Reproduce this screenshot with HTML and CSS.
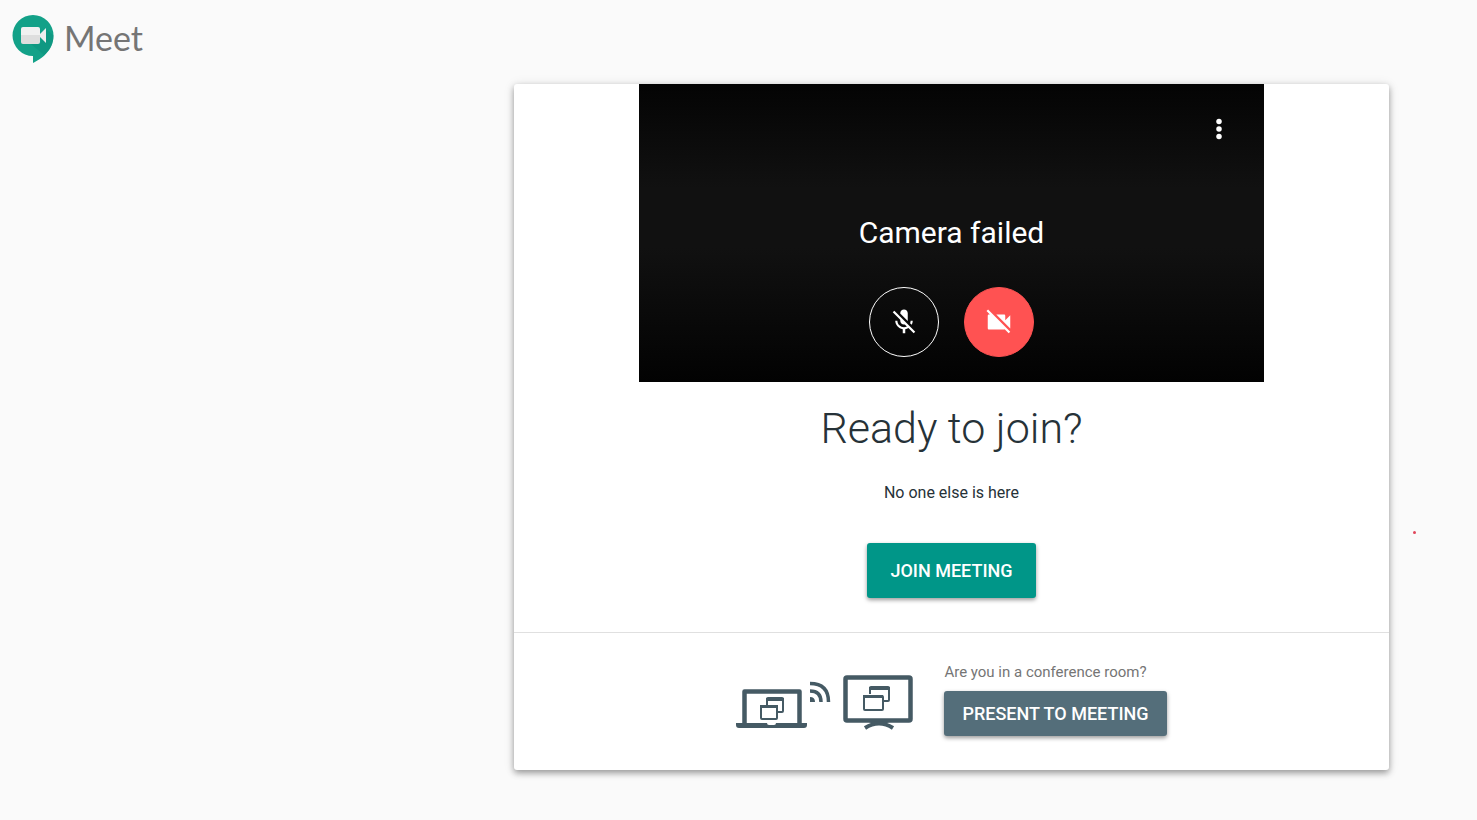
FILE: index.html
```html
<!DOCTYPE html>
<html lang="en">
<head>
    <meta charset="UTF-8">
    <meta name="viewport" content="width=device-width, initial-scale=1.0">
    <title>Meet</title>
    <link rel="stylesheet" href="styles.css">
</head>
<body>
    <header class="header">
        <svg class="logo" viewBox="0 0 42 50" aria-hidden="true">
            <path fill="#13a188" d="M21 1a20.500 20.500 0 1 0 0 41v7c8-4 20.500-12 20.500-27.500A20.500 20.500 0 0 0 21 1z"/>
            <path fill="#0c8f7c" d="M28 30l6-15 7.500 6.500c0 9-4 15-9.500 19.500L19 30z" opacity=".5"/>
            <path fill="#f1f1f1" d="M11 13h15q2 0 2 2v7H9v-7q0-2 2-2z"/>
            <path fill="#dedede" d="M9 21h19v7q0 2-2 2H11q-2 0-2-2z"/>
            <path fill="#eeeeee" d="M28 20l6-6v15l-6-6z"/>
        </svg>
        <span class="product">Meet</span>
    </header>

    <main class="main">
        <section class="card">
            <div class="preview">
                <button class="menu" aria-label="More options">
                    <svg class="icon" viewBox="0 0 24 24"><circle cx="12" cy="6" r="2.200"/><circle cx="12" cy="12" r="2.200"/><circle cx="12" cy="18" r="2.200"/></svg>
                </button>
                <p class="status">Camera failed</p>
                <div class="controls">
                    <button class="control" aria-label="Turn on microphone">
                        <svg class="icon" viewBox="0 0 24 24"><path d="M19 11h-1.700c0 .74-.16 1.430-.43 2.050l1.230 1.230c.56-.98.9-2.090.9-3.280zm-4.020.17c0-.06.02-.11.02-.17V5c0-1.660-1.340-3-3-3S9 3.340 9 5v.18l5.980 5.990zM4.270 3L3 4.270l6.010 6.010V11c0 1.660 1.330 3 2.990 3 .22 0 .44-.03.65-.08l1.660 1.660c-.71.33-1.500.52-2.310.52-2.760 0-5.300-2.100-5.300-5.100H5c0 3.410 2.720 6.230 6 6.720V21h2v-3.280c.91-.13 1.770-.45 2.540-.9L19.730 21 21 19.730 4.270 3z"/></svg>
                    </button>
                    <button class="control off" aria-label="Turn on camera">
                        <svg class="icon" viewBox="0 0 24 24"><path d="M21 6.500l-4 4V7c0-.55-.45-1-1-1H9.820L21 17.180V6.500zM3.270 2L2 3.270 4.730 6H4c-.55 0-1 .45-1 1v10c0 .55.45 1 1 1h12c.21 0 .39-.08.54-.18L19.730 21 21 19.730 3.270 2z"/></svg>
                    </button>
                </div>
            </div>

            <div class="join">
                <h1>Ready to join?</h1>
                <p class="people">No one else is here</p>
                <button class="btn btn-join">JOIN MEETING</button>
            </div>

            <div class="present">
                <svg class="devices" viewBox="0 0 178 56" fill="none" stroke="#455a64" aria-hidden="true">
                    <!-- laptop -->
                    <path stroke-width="4.500" stroke-linejoin="round" d="M8.500 50V17.500h55V50"/>
                    <path fill="#455a64" stroke="none" d="M0 49h31q0 2 2 2h5q2 0 2-2h31v2q0 3-3 3H3q-3 0-3-3z"/>
                    <path stroke-width="2" d="M31 32v-7q0-1 1-1h14q1 0 1 1v12q0 1-1 1h-5"/>
                    <path stroke-width="3" d="M30 25.500h18M24 32.500h18"/>
                    <rect stroke-width="2" x="25" y="32" width="16" height="13" rx="1"/>
                    <!-- cast waves -->
                    <path fill="#455a64" stroke="none" d="M74 23q5 0 5 5h-5z"/>
                    <path stroke-width="3.500" d="M74 17q11 0 11 11M74 9.500q18.500 0 18.500 18.500"/>
                    <!-- tv -->
                    <rect stroke-width="4.500" x="109.500" y="3.500" width="65" height="43" rx="1.500"/>
                    <path stroke-width="4" d="M129 54q14-9 28 0"/>
                    <path fill="#455a64" stroke="none" d="M133 48h20l-4 2h-12z"/>
                    <path stroke-width="2" d="M134 20v-6q0-1 1-1h17q1 0 1 1v12q0 1-1 1h-5"/>
                    <path stroke-width="3" d="M133 14.500h21M127 22.500h20"/>
                    <rect stroke-width="2" x="128" y="22" width="19" height="14" rx="1"/>
                </svg>
                <div class="present-action">
                    <p class="question">Are you in a conference room?</p>
                    <button class="btn btn-present">PRESENT TO MEETING</button>
                </div>
            </div>
        </section>
        <span class="dot"></span>
    </main>
</body>
</html>
```

FILE: styles.css
```css
* {
    box-sizing: border-box;
}

body {
    margin: 0;
    background-color: #fafafa;
    color: #263238;
    font-family: Roboto, Arial, sans-serif;
}

h1,
p {
    margin: 0;
    font-weight: 400;
}

button {
    padding: 0;
    border: 0;
    background: none;
    color: white;
    font-family: inherit;
    cursor: pointer;
}

.header {
    display: flex;
    align-items: center;
    gap: 10px;
    padding: 14px 12px 20px;
}

.logo {
    width: 42px;
    height: 50px;
}

.product {
    padding-bottom: 2px;
    color: #757575;
    font-family: Lato, sans-serif;
    font-size: 34px;
    line-height: 40px;
}

.main {
    position: relative;
    display: flex;
    justify-content: flex-end;
    padding: 0 88px 50px;
}

.card {
    width: 100%;
    max-width: 875px;
    border-radius: 3px;
    background-color: white;
    box-shadow: 0 3px 6px rgba(0, 0, 0, 0.35), 0 1px 12px rgba(0, 0, 0, 0.1);
}

/* Camera preview */
.preview {
    position: relative;
    display: flex;
    flex-direction: column;
    align-items: center;
    gap: 36px;
    max-width: 625px;
    margin: 0 auto;
    padding: 131px 25px 25px;
    background: linear-gradient(#040404, #111111 35%, #111111 55%, #020202);
}

.menu {
    position: absolute;
    top: 30px;
    right: 30px;
}

.icon {
    display: block;
    width: 30px;
    height: 30px;
    fill: white;
}

.status {
    color: white;
    font-size: 30px;
    line-height: 36px;
}

.controls {
    display: flex;
    gap: 25px;
}

.control {
    display: flex;
    align-items: center;
    justify-content: center;
    width: 70px;
    height: 70px;
    border: 1px solid white;
    border-radius: 50%;
}

.control.off {
    border-color: #ff5252;
    background-color: #ff5252;
}

/* Join */
.join {
    display: flex;
    flex-direction: column;
    align-items: center;
    padding: 20px 25px 34px;
}

.join h1 {
    font-size: 43px;
    font-weight: 300;
    line-height: 52px;
}

.people {
    margin: 29px 0 40px;
    font-size: 16px;
    line-height: 20px;
}

.btn {
    border-radius: 3px;
    font-size: 18px;
    font-weight: 500;
    box-shadow: 0 2px 4px rgba(0, 0, 0, 0.4);
}

.btn-join {
    height: 55px;
    padding: 0 23px;
    background-color: #009688;
}

/* Present */
.present {
    display: flex;
    align-items: center;
    justify-content: center;
    gap: 30px;
    padding: 29px 25px 34px;
    border-top: 1px solid #e0e0e0;
}

.devices {
    width: 178px;
    height: 56px;
    margin-top: 6px;
}

.question {
    margin-bottom: 9px;
    color: #757575;
    font-size: 15px;
    line-height: 20px;
}

.btn-present {
    height: 45px;
    padding: 0 18px;
    background-color: #546e7a;
}

.dot {
    position: absolute;
    top: 447px;
    right: 61px;
    width: 3px;
    height: 3px;
    border-radius: 50%;
    background-color: #e0455a;
}
```
